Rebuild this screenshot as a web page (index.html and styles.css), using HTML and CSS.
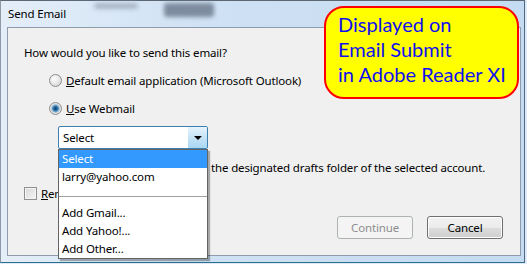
FILE: index.html
```html
<!DOCTYPE html>
<html lang="en">
<head>
  <meta charset="UTF-8">
  <title>Send Email</title>
  <link rel="stylesheet" href="styles.css">
</head>
<body>
<div class="window">
  <div class="titlebar">
    <span class="title">Send Email</span>
    <span class="glass glass-a"></span>
    <span class="glass glass-b"></span>
  </div>
  <div class="content">
    <p class="question">How would you like to send this email?</p>
    <label class="option">
      <span class="radio"></span>
      <span><u>D</u>efault email application (Microsoft Outlook)</span>
    </label>
    <label class="option">
      <span class="radio checked"></span>
      <span><u>U</u>se Webmail</span>
    </label>
    <div class="select">
      <span class="select-value">Select</span>
      <span class="select-button"><span class="arrow"></span></span>
      <ul class="dropdown">
        <li class="item active">Select</li>
        <li class="item">larry@yahoo.com</li>
        <li class="item separator"></li>
        <li class="item">Add Gmail...</li>
        <li class="item">Add Yahoo!...</li>
        <li class="item">Add Other...</li>
      </ul>
    </div>
    <p class="info">the designated drafts folder of the selected account.</p>
    <label class="option remember">
      <span class="checkbox"></span>
      <span><u>R</u>emember my choice</span>
    </label>
    <div class="actions">
      <button class="btn" disabled>Continue</button>
      <button class="btn">Cancel</button>
    </div>
  </div>
  <div class="callout">
    Displayed on<br>
    Email Submit<br>
    in Adobe Reader XI
  </div>
</div>
</body>
</html>
```

FILE: styles.css
```css
* {
  margin: 0;
  padding: 0;
  box-sizing: border-box;
}

body {
  width: 527px;
  height: 264px;
  overflow: hidden;
  background: #dfeaf6;
  font-family: "Noto Sans", "Liberation Sans", sans-serif;
  font-size: 11.5px;
  letter-spacing: -0.15px;
  color: #000;
}

.window {
  position: relative;
  width: 525px;
  height: 263px;
  border-top: 1px solid #5d6673;
  border-left: 1px solid #8e99a6;
  border-right: 1px solid #4f6a80;
  border-bottom: 1px solid #2b6f8f;
  background: linear-gradient(to right, #e4eef9, #cfe1f4 40%, #c4dbf1);
  padding: 0 3px 6px 6px;
  display: flex;
  flex-direction: column;
}

.titlebar {
  height: 26px;
  display: flex;
  align-items: flex-start;
  padding: 5px 0 0 1px;
}

.title {
  line-height: 15px;
  width: 86px;
}

.glass {
  display: block;
  filter: blur(2px);
  border-radius: 3px;
}

.glass-a {
  width: 44px;
  height: 6px;
  margin-top: -3px;
  background: #a9b6c5;
}

.glass-b {
  width: 50px;
  height: 14px;
  margin: -3px 0 0 26px;
  background: #7d8c9f;
}

.content {
  position: relative;
  flex: 1;
  background: #f0f0f0;
  border: 1px solid #8f9cab;
  padding: 17px 0 0 16px;
}

.question {
  line-height: 15px;
}

.option {
  display: flex;
  align-items: center;
  gap: 4px;
  line-height: 15px;
  margin: 13px 0 0 25px;
}

.radio {
  width: 13px;
  height: 13px;
  border-radius: 50%;
  border: 1px solid #8c8c8c;
  background: radial-gradient(circle at 40% 35%, #ffffff, #e3e3e3 55%, #c9c9c9);
}

.radio.checked {
  background: radial-gradient(circle, #0f3f66 0, #2a6aa0 2px, #7fb3dc 3.5px, #d8d8d8 4.5px, #f2f2f2 6px);
}

.select {
  position: relative;
  width: 150px;
  height: 23px;
  margin: 10px 0 0 34px;
  border: 1px solid #3c7fb1;
  border-radius: 2px;
  display: flex;
  background: #fff;
}

.select-value {
  flex: 1;
  padding: 3px 0 0 4px;
  line-height: 15px;
}

.select-button {
  width: 19px;
  background: linear-gradient(to bottom, #e6f4fc, #c6e4f7 50%, #a9d6f3);
  display: flex;
  align-items: center;
  justify-content: center;
}

.arrow {
  width: 0;
  height: 0;
  border-left: 4px solid transparent;
  border-right: 4px solid transparent;
  border-top: 4px solid #000;
  margin: 1px 0 0 1px;
}

.dropdown {
  position: absolute;
  top: 22px;
  left: -1px;
  width: 150px;
  list-style: none;
  background: #fff;
  border: 1px solid #646464;
  box-shadow: 2px 2px 1px rgba(0, 0, 0, 0.3);
  z-index: 2;
}

.item {
  height: 18px;
  line-height: 18px;
  padding-left: 3px;
}

.item.active {
  background: #3399ff;
  color: #fff;
}

.separator {
  position: relative;
}

.separator::after {
  content: "";
  position: absolute;
  left: 0;
  right: 0;
  top: 10px;
  border-top: 1px solid #a0a0a0;
}

.info {
  line-height: 15px;
  margin: 11px 0 0 187px;
}

.remember {
  margin: 11px 0 0 0;
}

.checkbox {
  width: 13px;
  height: 13px;
  border: 1px solid #8e8f8f;
  background: linear-gradient(135deg, #d8d8d8, #f4f4f4);
  box-shadow: inset 0 0 0 1px #f4f4f4;
}

.actions {
  display: flex;
  justify-content: flex-end;
  gap: 14px;
  margin: 15px 17px 0 0;
}

.btn {
  width: 76px;
  height: 23px;
  font: inherit;
  letter-spacing: inherit;
  color: #000;
  border: 1px solid #707070;
  border-radius: 3px;
  background: linear-gradient(to bottom, #f2f2f2, #ebebeb 50%, #dddddd 51%, #cfcfcf);
  box-shadow: inset 0 0 0 1px #fcfcfc;
}

.btn:disabled {
  color: #8d8d8d;
  border-color: #adb2b5;
  background: #f4f4f4;
  box-shadow: none;
}

.callout {
  position: absolute;
  left: 323px;
  top: 5px;
  width: 195px;
  height: 93px;
  border: 2px solid #ff0000;
  border-radius: 20px;
  background: #ffff00;
  color: #1010f0;
  font-family: Lato, "Open Sans", sans-serif;
  font-size: 20px;
  letter-spacing: 0;
  line-height: 25px;
  padding: 4px 0 0 12px;
  z-index: 3;
}
```
